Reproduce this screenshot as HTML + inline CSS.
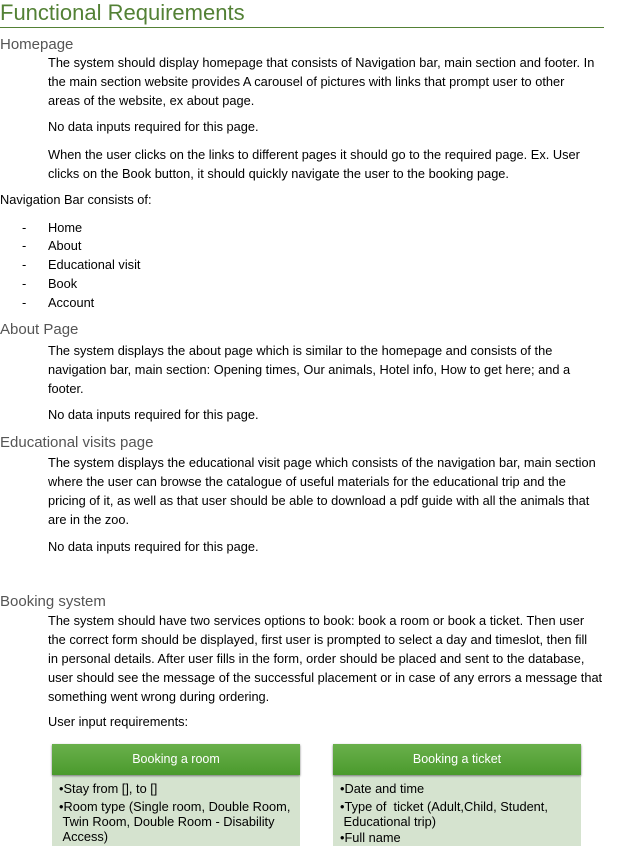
<!DOCTYPE html>
<html><head><style>
body{margin:0;width:625px;height:846px;background:#fff;position:relative;overflow:hidden;font-family:"Liberation Sans",Arial,sans-serif;color:#000}
.l{position:absolute;white-space:nowrap;font-size:12.8px;line-height:18px;letter-spacing:0}
.h{position:absolute;white-space:nowrap;font-size:15px;line-height:20px;color:#555;left:0}
.box{position:absolute;width:248px;background:#d5e3cf;top:744px;height:102px}
.bh{height:31px;background:linear-gradient(#6ab04c,#4a9a2c);color:#fff;text-align:center;line-height:31px;font-size:12.5px;box-shadow:0 1px 2px #777}
.bl{position:absolute;font-size:12.8px;line-height:15px;letter-spacing:0;white-space:nowrap}
</style></head><body>
<div style="position:absolute;left:0;top:0;font-size:22px;line-height:26px;color:#538135;white-space:nowrap">Functional Requirements</div>
<div style="position:absolute;left:0;top:27px;width:604px;height:1px;background:#538135"></div>
<div class="h" style="top:35px">Homepage</div>
<div class="l" style="left:48px;top:54px">The system should display homepage that consists of Navigation bar, main section and footer. In</div>
<div class="l" style="left:48px;top:73px">the main section website provides A carousel of pictures with links that prompt user to other</div>
<div class="l" style="left:48px;top:92px">areas of the website, ex about page.</div>
<div class="l" style="left:48px;top:118px">No data inputs required for this page.</div>
<div class="l" style="left:48px;top:146px">When the user clicks on the links to different pages it should go to the required page. Ex. User</div>
<div class="l" style="left:48px;top:165px">clicks on the Book button, it should quickly navigate the user to the booking page.</div>
<div class="l" style="left:0;top:191px">Navigation Bar consists of:</div>
<div class="l" style="left:22px;top:219px">-</div><div class="l" style="left:48px;top:219px">Home</div>
<div class="l" style="left:22px;top:237px">-</div><div class="l" style="left:48px;top:237px">About</div>
<div class="l" style="left:22px;top:256px">-</div><div class="l" style="left:48px;top:256px">Educational visit</div>
<div class="l" style="left:22px;top:275px">-</div><div class="l" style="left:48px;top:275px">Book</div>
<div class="l" style="left:22px;top:294px">-</div><div class="l" style="left:48px;top:294px">Account</div>
<div class="h" style="top:320px">About Page</div>
<div class="l" style="left:48px;top:342px">The system displays the about page which is similar to the homepage and consists of the</div>
<div class="l" style="left:48px;top:361px">navigation bar, main section: Opening times, Our animals, Hotel info, How to get here; and a</div>
<div class="l" style="left:48px;top:380px">footer.</div>
<div class="l" style="left:48px;top:406px">No data inputs required for this page.</div>
<div class="h" style="top:433px">Educational visits page</div>
<div class="l" style="left:48px;top:454px">The system displays the educational visit page which consists of the navigation bar, main section</div>
<div class="l" style="left:48px;top:473px">where the user can browse the catalogue of useful materials for the educational trip and the</div>
<div class="l" style="left:48px;top:492px">pricing of it, as well as that user should be able to download a pdf guide with all the animals that</div>
<div class="l" style="left:48px;top:511px">are in the zoo.</div>
<div class="l" style="left:48px;top:538px">No data inputs required for this page.</div>
<div class="h" style="top:592px">Booking system</div>
<div class="l" style="left:48px;top:612px">The system should have two services options to book: book a room or book a ticket. Then user</div>
<div class="l" style="left:48px;top:631px">the correct form should be displayed, first user is prompted to select a day and timeslot, then fill</div>
<div class="l" style="left:48px;top:650px">in personal details. After user fills in the form, order should be placed and sent to the database,</div>
<div class="l" style="left:48px;top:669px">user should see the message of the successful placement or in case of any errors a message that</div>
<div class="l" style="left:48px;top:688px">something went wrong during ordering.</div>
<div class="l" style="left:48px;top:713px">User input requirements:</div>
<div class="box" style="left:52px"><div class="bh">Booking a room</div>
<div class="bl" style="left:7px;top:37px">•Stay from [], to []</div>
<div class="bl" style="left:7px;top:55px">•Room type (Single room, Double Room,<br>&nbsp;Twin Room, Double Room - Disability<br>&nbsp;Access)</div></div>
<div class="box" style="left:333px"><div class="bh">Booking a ticket</div>
<div class="bl" style="left:7px;top:37px">•Date and time</div>
<div class="bl" style="left:7px;top:55px">•Type of &nbsp;ticket (Adult,Child, Student,<br>&nbsp;Educational trip)</div>
<div class="bl" style="left:7px;top:86px">•Full name</div></div>
</body></html>
